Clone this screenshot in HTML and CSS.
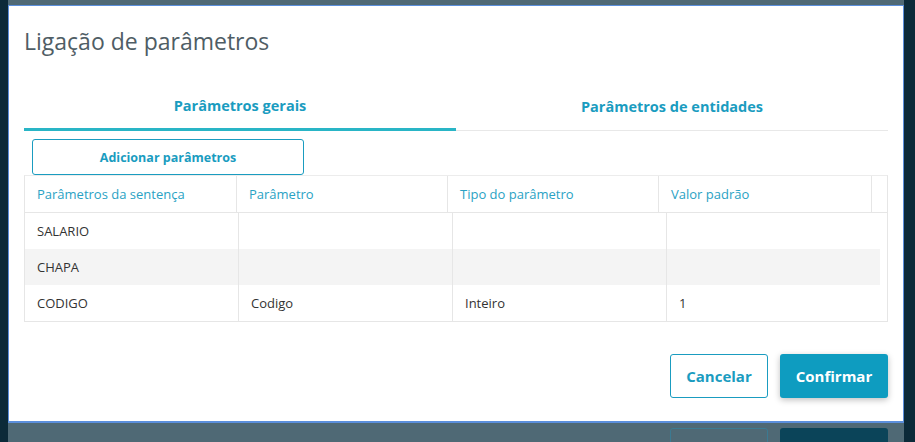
FILE: index.html
```html
<!DOCTYPE html>
<html lang="pt">
<head>
<meta charset="utf-8">
<title>Ligação de parâmetros</title>
<link rel="stylesheet" href="styles.css">
</head>
<body>
<div class="backdrop">
  <div class="behind-actions">
    <span class="ghost ghost-outline"></span>
    <span class="ghost ghost-fill"></span>
  </div>
</div>
<div class="modal">
  <h1 class="modal-title">Ligação de parâmetros</h1>
  <div class="tabs">
    <div class="tab tab-active">Parâmetros gerais</div>
    <div class="tab">Parâmetros de entidades</div>
  </div>
  <button class="btn-add">Adicionar parâmetros</button>
  <div class="table">
    <div class="thead">
      <div class="th">Parâmetros da sentença</div>
      <div class="th">Parâmetro</div>
      <div class="th">Tipo do parâmetro</div>
      <div class="th">Valor padrão</div>
      <div class="th th-gutter"></div>
    </div>
    <div class="tbody">
      <div class="tr">
        <div class="td">SALARIO</div><div class="td"></div><div class="td"></div><div class="td"></div>
      </div>
      <div class="tr tr-striped">
        <div class="td">CHAPA</div><div class="td"></div><div class="td"></div><div class="td"></div>
      </div>
      <div class="tr">
        <div class="td">CODIGO</div><div class="td">Codigo</div><div class="td">Inteiro</div><div class="td">1</div>
      </div>
    </div>
  </div>
  <div class="footer">
    <button class="btn btn-outline">Cancelar</button>
    <button class="btn btn-primary">Confirmar</button>
  </div>
</div>
</body>
</html>
```
FILE: styles.css
```css
* { box-sizing: border-box; }
html, body { margin: 0; padding: 0; }
body {
  width: 915px;
  height: 442px;
  overflow: hidden;
  background: #0c2a39;
  font-family: "Open Sans", "Lato", sans-serif;
  position: relative;
}
.backdrop {
  margin: 0 11px 0 8px;
  height: 442px;
  background: #4f6975;
  display: flex;
  flex-direction: column;
  justify-content: flex-end;
}
.behind-actions {
  display: flex;
  justify-content: flex-end;
  gap: 12px;
  padding-right: 16px;
  height: 14px;
}
.ghost {
  display: block;
  height: 20px;
  border-radius: 3px;
}
.ghost-outline { width: 98px; border: 1px solid #3b7a92; }
.ghost-fill { width: 108px; background: #0b4459; }

.modal {
  position: absolute;
  left: 8px;
  top: 5px;
  width: 896px;
  height: 418px;
  background: #fff;
  border: 1px solid #5b8fdc;
  border-bottom-width: 2px;
  padding: 0 15px;
  display: flex;
  flex-direction: column;
}
.modal-title {
  margin: 0;
  padding-top: 19px;
  font-size: 23px;
  line-height: 32px;
  font-weight: 400;
  color: #4f5d65;
  height: 78px;
}
.tabs {
  display: flex;
  height: 47px;
  border-bottom: 1px solid #e8e8e8;
}
.tab {
  flex: 1;
  display: flex;
  align-items: center;
  justify-content: center;
  font-size: 14.5px;
  font-weight: 700;
  color: #1a9cc0;
  padding-bottom: 2px;
}
.tab-active {
  border-bottom: 3px solid #29b5c6;
  margin-bottom: -1px;
}
.btn-add {
  margin: 8px 0 0 8px;
  width: 272px;
  height: 36px;
  border: 1px solid #1a9cc0;
  border-radius: 3px;
  background: #fff;
  color: #1a9cc0;
  font-family: inherit;
  font-size: 12.5px;
  font-weight: 700;
  padding: 0;
}
.table {
  border: 1px solid #e6e6e6;
  border-top: 1px solid #ececec;
}
.thead {
  display: grid;
  grid-template-columns: 212px 211px 211px 213px 1fr;
  height: 37px;
  border-bottom: 1px solid #e6e6e6;
}
.th {
  border-right: 1px solid #e6e6e6;
  display: flex;
  align-items: center;
  padding-left: 12px;
  font-size: 13px;
  color: #2aa2c4;
}
.th-gutter { border-right: 0; }
.tbody { padding-right: 7px; }
.tr {
  display: grid;
  grid-template-columns: 214px 214px 214px 1fr;
  height: 36px;
}
.tr-striped { background: #f4f4f4; }
.td {
  border-right: 1px solid #e6e6e6;
  display: flex;
  align-items: center;
  padding-left: 12px;
  font-size: 13px;
  color: #333;
}
.td:last-child { border-right: 0; }
.footer {
  margin-top: 32px;
  display: flex;
  justify-content: flex-end;
  gap: 12px;
}
.btn {
  height: 44px;
  border-radius: 3px;
  font-family: inherit;
  font-size: 15px;
  font-weight: 700;
  padding: 0;
}
.btn-outline {
  width: 98px;
  background: #fff;
  border: 1px solid #1a9cc0;
  color: #1a9cc0;
}
.btn-primary {
  width: 108px;
  background: #0e9cc0;
  border: 0;
  color: #fff;
  box-shadow: 0 2px 6px rgba(0, 0, 0, 0.25);
}
```
